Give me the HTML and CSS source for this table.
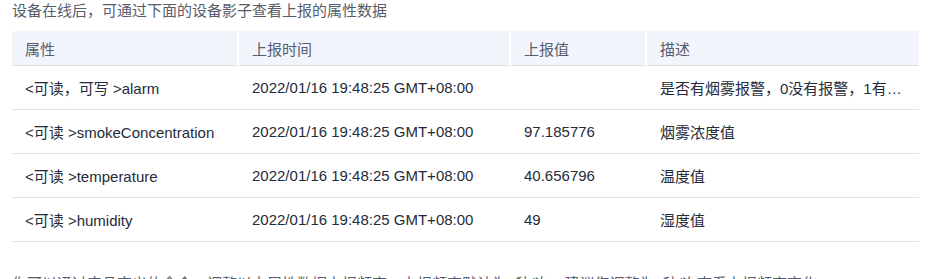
FILE: index.html
```html
<!DOCTYPE html>
<html lang="zh-CN">
<head>
<meta charset="utf-8">
<title>设备影子</title>
<link rel="stylesheet" href="styles.css">
</head>
<body>
<div class="page">
  <p class="tip">设备在线后，可通过下面的设备影子查看上报的属性数据</p>
  <table class="shadow">
    <colgroup>
      <col class="c1"><col class="c2"><col class="c3"><col class="c4">
    </colgroup>
    <thead>
      <tr>
        <th>属性</th>
        <th>上报时间</th>
        <th>上报值</th>
        <th>描述</th>
      </tr>
    </thead>
    <tbody>
      <tr>
        <td>&lt;可读，可写 &gt;alarm</td>
        <td>2022/01/16 19:48:25 GMT+08:00</td>
        <td></td>
        <td>是否有烟雾报警，0没有报警，1有烟雾报警</td>
      </tr>
      <tr>
        <td>&lt;可读 &gt;smokeConcentration</td>
        <td>2022/01/16 19:48:25 GMT+08:00</td>
        <td>97.185776</td>
        <td>烟雾浓度值</td>
      </tr>
      <tr>
        <td>&lt;可读 &gt;temperature</td>
        <td>2022/01/16 19:48:25 GMT+08:00</td>
        <td>40.656796</td>
        <td>温度值</td>
      </tr>
      <tr>
        <td>&lt;可读 &gt;humidity</td>
        <td>2022/01/16 19:48:25 GMT+08:00</td>
        <td>49</td>
        <td>湿度值</td>
      </tr>
    </tbody>
  </table>
  <p class="tip bottom">你可以通过产品定义的命令，调整以上属性数据上报频率，上报频率默认为5秒/次，建议您调整为1秒/次查看上报频率变化</p>
</div>
</body>
</html>
```
FILE: styles.css
```css
html, body {
  margin: 0;
  padding: 0;
  background: #ffffff;
}
body {
  font-family: "Liberation Sans", "Noto Sans CJK SC", sans-serif;
  font-size: 15px;
  color: #252b3a;
}
.page {
  padding: 0 27px 0 12px;
}
.tip {
  margin: 0;
  line-height: 21px;
  color: #575d6c;
}
.tip.bottom {
  margin-top: 31px;
  white-space: nowrap;
}
.shadow {
  margin-top: 10px;
  width: 907px;
  border-collapse: collapse;
  table-layout: fixed;
}
.c1 { width: 226px; }
.c2 { width: 272px; }
.c3 { width: 136px; }
.c4 { width: 273px; }
.shadow th {
  height: 34px;
  padding: 0 12px 0 13px;
  background: #f2f5fc;
  border-bottom: 1px solid #dfe1e6;
  border-left: 2px solid #ffffff;
  text-align: left;
  font-weight: normal;
  color: #575d6c;
}
.shadow th:first-child {
  border-left: none;
}
.shadow td {
  height: 43px;
  padding: 0 12px 0 13px;
  border-bottom: 1px solid #dfe1e6;
  white-space: nowrap;
  overflow: hidden;
  text-overflow: ellipsis;
  color: #252b3a;
}
.shadow td + td {
  padding-left: 14px;
}
```
